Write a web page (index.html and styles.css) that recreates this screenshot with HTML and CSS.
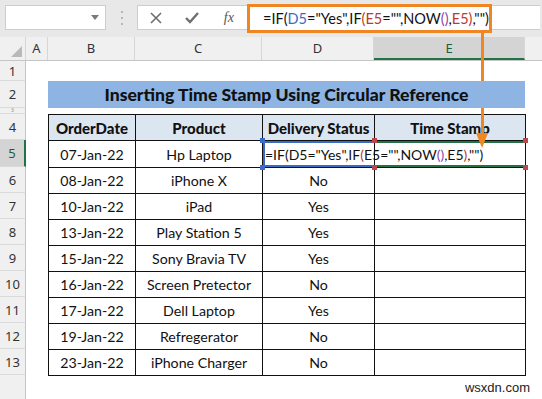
FILE: index.html
```html
<!DOCTYPE html>
<html lang="en">
<head>
    <meta charset="UTF-8">
    <title>Inserting Time Stamp Using Circular Reference</title>
    <link rel="stylesheet" href="styles.css">
</head>
<body>
<div class="app">
    <!-- formula bar -->
    <div class="toolbar">
        <div class="namebox"><span class="caret"></span></div>
        <div class="grip">
            <svg width="4" height="14" viewBox="0 0 4 14"><rect x="1" y="0" width="2" height="2" fill="#b5b5b5"/><rect x="1" y="6" width="2" height="2" fill="#b5b5b5"/><rect x="1" y="12" width="2" height="2" fill="#b5b5b5"/></svg>
        </div>
        <div class="fx-buttons">
            <span class="fx-btn">
                <svg width="12" height="12" viewBox="0 0 12 12"><path d="M1 1 L11 11 M11 1 L1 11" stroke="#6f6f6f" stroke-width="1.6" fill="none"/></svg>
            </span>
            <span class="fx-btn">
                <svg width="14" height="12" viewBox="0 0 14 12"><path d="M1 6 L5 10 L13 1" stroke="#6f6f6f" stroke-width="2.4" fill="none"/></svg>
            </span>
            <span class="fx-btn fx-label">fx</span>
        </div>
        <div class="formula">
            <span>=IF(<span class="ref-d">D5</span>="Yes",IF<span class="ref-e">(E5</span>="",NOW<span class="paren">()</span>,<span class="ref-e">E5)</span>,"")</span><span class="cursor"></span>
        </div>
        <div class="formula-rest"></div>
    </div>

    <!-- column headers -->
    <div class="colheads">
        <div class="corner"><span class="corner-tri"></span></div>
        <div class="colhead col-a">A</div>
        <div class="colhead col-b">B</div>
        <div class="colhead col-c">C</div>
        <div class="colhead col-d">D</div>
        <div class="colhead col-e selected">E</div>
        <div class="colhead col-f"></div>
    </div>

    <div class="sheet">
        <div class="rownums">
            <div class="rownum r-1">1</div>
            <div class="rownum r-2">2</div>
            <div class="rownum r-3">3</div>
            <div class="rownum r-n">4</div>
            <div class="rownum r-5 selected">5</div>
            <div class="rownum r-n">6</div>
            <div class="rownum r-n">7</div>
            <div class="rownum r-n">8</div>
            <div class="rownum r-n">9</div>
            <div class="rownum r-n">10</div>
            <div class="rownum r-n">11</div>
            <div class="rownum r-n">12</div>
            <div class="rownum r-n">13</div>
            <div class="rownum r-n"></div>
        </div>

        <div class="cells">
            <div class="spacer-1"></div>
            <div class="title">Inserting Time Stamp Using Circular Reference</div>
            <div class="spacer-3"></div>
            <table class="data">
                <colgroup>
                    <col class="w-b"><col class="w-c"><col class="w-d"><col class="w-e">
                </colgroup>
                <tr class="head">
                    <th>OrderDate</th><th>Product</th><th>Delivery Status</th><th>Time Stamp</th>
                </tr>
                <tr class="row-5">
                    <td>07-Jan-22</td>
                    <td>Hp Laptop</td>
                    <td class="editing">
                        <span class="edit-text">=IF(D5="Yes",IF<span class="ref-e">(</span>E5="",NOW<span class="paren">()</span>,E5<span class="ref-e">)</span>,"")</span>
                        <span class="sq sq-tl"></span><span class="sq sq-bl"></span>
                    </td>
                    <td class="active">
                        <span class="sq sq-red sq-tl"></span><span class="sq sq-red sq-bl"></span>
                        <span class="sq sq-red sq-tr"></span><span class="sq sq-red sq-br"></span>
                    </td>
                </tr>
                <tr><td>08-Jan-22</td><td>iPhone X</td><td>No</td><td></td></tr>
                <tr><td>10-Jan-22</td><td>iPad</td><td>Yes</td><td></td></tr>
                <tr><td>13-Jan-22</td><td>Play Station 5</td><td>Yes</td><td></td></tr>
                <tr><td>15-Jan-22</td><td>Sony Bravia TV</td><td>Yes</td><td></td></tr>
                <tr><td>16-Jan-22</td><td>Screen Pretector</td><td>No</td><td></td></tr>
                <tr><td>17-Jan-22</td><td>Dell Laptop</td><td>Yes</td><td></td></tr>
                <tr><td>19-Jan-22</td><td>Refregerator</td><td>No</td><td></td></tr>
                <tr><td>23-Jan-22</td><td>iPhone Charger</td><td>No</td><td></td></tr>
            </table>
        </div>
    </div>

    <!-- arrow from formula bar to E5 -->
    <svg class="arrow" width="542" height="399" viewBox="0 0 542 399">
        <rect x="481" y="33" width="3" height="110" fill="#ef8523"/>
        <polygon points="476,133 488,133 482,148" fill="#ef8523"/>
    </svg>

    <div class="watermark">wsxdn.com</div>
</div>
</body>
</html>
```

FILE: styles.css
```css
/* layout */
body { margin: 0; background: #fff; font-family: Lato, "Open Sans", sans-serif; }
.app { position: relative; width: 542px; height: 399px; overflow: hidden; }

/* formula bar */
.toolbar { height: 37px; box-sizing: border-box; padding-top: 5px; background: #e8e8e8; display: flex; align-items: flex-start; }
.namebox { margin-left: 5px; width: 101px; height: 25px; box-sizing: border-box; background: #fff; border: 1px solid #cdcdcd; display: flex; align-items: center; justify-content: flex-end; padding-right: 6px; }
.caret { width: 0; height: 0; border-left: 4px solid transparent; border-right: 4px solid transparent; border-top: 5px solid #7a7a7a; }
.grip { width: 31px; height: 25px; display: flex; align-items: center; justify-content: center; }
.fx-buttons { width: 110px; height: 25px; box-sizing: border-box; background: #fff; border: 1px solid #cdcdcd; border-right: none; display: flex; align-items: center; }
.fx-btn { width: 37px; display: flex; justify-content: center; }
.fx-label { font-family: "Liberation Serif", serif; font-style: italic; font-size: 14px; color: #555; }
.formula { margin-top: -1px; width: 245px; height: 29px; box-sizing: border-box; border: 3px solid #ef8523; background: #fff; padding-left: 13px; display: flex; align-items: center; font-size: 14.5px; color: #111; white-space: nowrap; }
.cursor { display: inline-block; width: 1px; height: 17px; background: #222; margin-left: 2px; }
.formula-rest { flex: 1; height: 25px; margin-right: 2px; background: #fff; border-top: 1px solid #cdcdcd; border-bottom: 1px solid #cdcdcd; box-sizing: border-box; }
.ref-d { color: #3b6cc4; }
.ref-e { color: #c0392b; }
.paren { color: #8e44ad; }

/* column headers */
.colheads { height: 23px; display: flex; background: #f0f0f0; border-bottom: 1px solid #c6c6c6; box-sizing: content-box; }
.corner { width: 26px; box-sizing: border-box; border-right: 1px solid #d6d6d6; position: relative; }
.corner-tri { position: absolute; right: 3px; bottom: 3px; width: 0; height: 0; border-left: 11px solid transparent; border-bottom: 11px solid #b9b9b9; }
.colhead { box-sizing: border-box; border-right: 1px solid #d6d6d6; text-align: center; line-height: 23px; font-family: "Noto Sans", sans-serif; font-size: 13px; color: #333; }
.col-a { width: 22px; }
.col-b { width: 87px; }
.col-c { width: 127px; }
.col-d { width: 112px; }
.col-e { width: 151px; }
.col-f { flex: 1; border-right: none; }
.colhead.selected { background: #d4d4d4; border-bottom: 2px solid #217346; color: #1f5c39; line-height: 22px; }

/* sheet */
.sheet { display: flex; }
.rownums { width: 26px; flex-shrink: 0; background: #f0f0f0; }
.rownum { box-sizing: border-box; border-right: 1px solid #c6c6c6; border-bottom: 1px solid #dadada; text-align: center; font-family: "Noto Sans", sans-serif; font-size: 13px; color: #333; overflow: hidden; display: flex; align-items: center; justify-content: center; }
.r-1 { height: 20px; }
.r-2 { height: 27px; }
.r-3 { height: 6px; font-size: 5px; line-height: 5px; color: #888; }
.r-n { height: 26px; }
.r-5 { height: 27px; }
.rownum.selected { background: #d4d4d4; border-right: 2px solid #217346; color: #1f5c39; }
.rownum:last-child { height: 40px; border-bottom: none; }

.cells { flex: 1; padding-left: 22px; }
.spacer-1 { height: 20px; }
.spacer-3 { height: 6px; }
.title { position: relative; z-index: 3; width: 477px; height: 27px; background: #8db4e2; text-align: center; line-height: 28px; font-weight: 900; font-size: 17.6px; color: #111; }

/* data table */
.data { border-collapse: collapse; table-layout: fixed; width: 477px; font-size: 14.2px; color: #111; }
.w-b { width: 87px; }
.w-c { width: 127px; }
.w-d { width: 112px; }
.w-e { width: 151px; }
.data th, .data td { border: 1px solid #111; height: 25px; padding: 0; text-align: center; white-space: nowrap; }
.data th { background: #dce6f1; font-weight: 900; font-size: 15px; }
.data .row-5 td { height: 26px; }
.data td.editing { position: relative; text-align: left; overflow: visible; font-size: 14px; box-shadow: inset 2px 0 0 #3b6cc4, inset 0 2px 0 #3b6cc4, inset 0 -2px 0 #3b6cc4; }
.edit-text { position: relative; z-index: 1; padding-left: 2px; }
.data td.active { position: relative; box-shadow: inset 0 2px 0 #217346, inset 0 -2px 0 #217346; }
.sq { position: absolute; width: 5px; height: 5px; background: #3b6cc4; }
.sq-red { background: #b8484d; }
.sq-tl { left: -3px; top: -3px; }
.sq-bl { left: -3px; bottom: -3px; }
.sq-tr { right: -3px; top: -3px; }
.sq-br { right: -3px; bottom: -3px; }

/* overlays */
.arrow { position: absolute; left: 0; top: 0; z-index: 2; pointer-events: none; }
.watermark { position: absolute; right: 12px; bottom: 4px; font-family: "Liberation Sans", Arial, sans-serif; font-size: 13px; color: #222; }
```
